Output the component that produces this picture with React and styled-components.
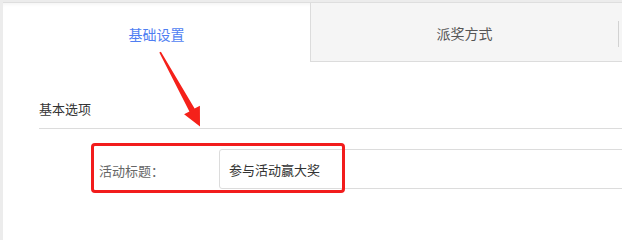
import React from 'react'
import styled, {createGlobalStyle} from 'styled-components'

const GlobalStyle = createGlobalStyle`
  html, body {
    margin: 0;
    padding: 0;
    background: #ececec;
    overflow: hidden;
  }
  body {
    font-family: "Noto Sans CJK SC", "Noto Sans", "Liberation Sans", sans-serif;
  }
`

const Page = styled.div`
  position: relative;
  margin: 2px 0 0 3px;
  width: 619px;
  height: calc(100vh - 3px);
  min-height: 205px;
  background: #fff;
  border-top: 1px solid #dedede;
  box-shadow: inset 0 4px 4px -3px rgba(0, 0, 0, 0.06);
  overflow: hidden;
`

const TabBar = styled.div`
  display: flex;
  height: 59px;
`

const Tab = styled.div`
  position: relative;
  flex: 0 0 ${p => (p.active ? '307px' : '308px')};
  display: flex;
  align-items: center;
  justify-content: center;
  font-size: 14px;
  color: ${p => (p.active ? '#4f7ef2' : '#555')};
  background: ${p => (p.active ? 'transparent' : '#f5f5f5')};
  border-left: ${p => (p.active ? 'none' : '1px solid #dcdcdc')};
  border-bottom: ${p => (p.active ? 'none' : '1px solid #dcdcdc')};
  box-sizing: border-box;
  padding-top: 2px;

  &::after {
    content: '';
    display: ${p => (p.divider ? 'block' : 'none')};
    position: absolute;
    right: -1px;
    top: 18px;
    height: 26px;
    border-right: 1px solid #d2d2d2;
  }
`

const Rest = styled.div`
  flex: 1;
  background: #f5f5f5;
  border-bottom: 1px solid #dcdcdc;
`

const Section = styled.div`
  padding-left: 36px;
`

const SectionTitle = styled.div`
  margin-top: 38px;
  padding-bottom: 10px;
  line-height: 18px;
  font-size: 13px;
  color: #333;
  border-bottom: 1px solid #dcdcdc;
`

const FormRow = styled.div`
  display: flex;
  align-items: center;
  margin-top: 20px;
  padding-left: 96px;
`

const Label = styled.label`
  flex: 0 0 120px;
  font-size: 13px;
  color: #666;
  padding-top: 2px;
`

const Input = styled.input`
  flex: 0 0 600px;
  height: 40px;
  box-sizing: border-box;
  border: 1px solid #dcdcdc;
  border-radius: 3px;
  padding: 0 9px;
  font-family: inherit;
  font-size: 13px;
  color: #333;
  outline: none;
`

const Highlight = styled.div`
  position: absolute;
  left: 88px;
  top: 140px;
  width: 254px;
  height: 50px;
  box-sizing: border-box;
  border: 3px solid #f21c1c;
  border-radius: 4px;
  pointer-events: none;
`

const Arrow = styled.svg`
  position: absolute;
  left: -3px;
  top: -3px;
  pointer-events: none;
`

export default function App() {
  return (
    <>
      <GlobalStyle />
      <Page>
        <TabBar>
          <Tab active>基础设置</Tab>
          <Tab divider>派奖方式</Tab>
          <Rest />
        </TabBar>
        <Section>
          <SectionTitle>基本选项</SectionTitle>
        </Section>
        <FormRow>
          <Label>活动标题：</Label>
          <Input defaultValue="参与活动赢大奖" />
        </FormRow>
        <Highlight />
        <Arrow width="622" height="208" viewBox="0 0 622 208">
          <polygon
            fill="#f5211a"
            points="159.3,52.6 160.9,51.8 194.6,108.6 199.9,105.7 200,126.5 184.1,114.3 189.4,111.4"
          />
        </Arrow>
      </Page>
    </>
  )
}
